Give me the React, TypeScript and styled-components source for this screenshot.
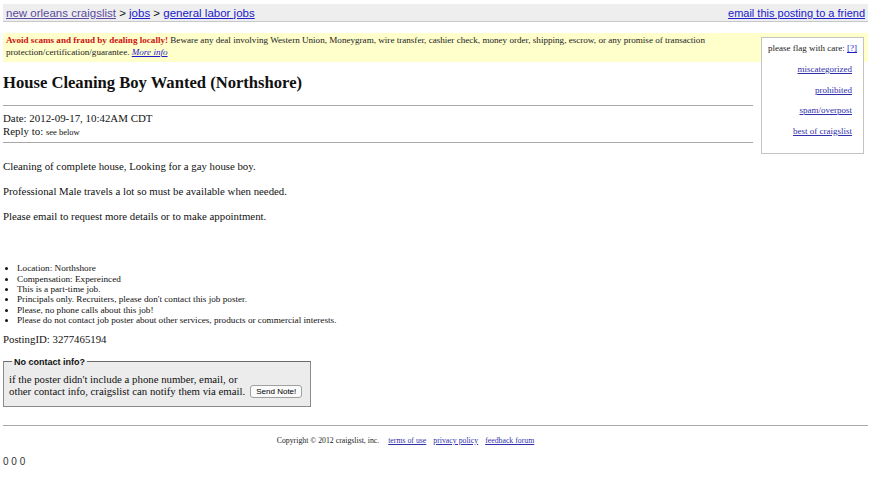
import React from 'react';
import styled, { createGlobalStyle } from 'styled-components';

const Global = createGlobalStyle`
  body {
    margin: 4px 3px;
    background: #fff;
    color: #111;
    font-family: 'Liberation Serif', 'Times New Roman', serif;
  }
  a { color: #1a1acc; }
`;

const TopBar = styled.div`
  display: flex;
  justify-content: space-between;
  align-items: center;
  height: 17px;
  padding: 0 3px;
  background: #eeeeee;
  border-bottom: 1px solid #c8c8c8;
  font-family: 'Liberation Sans', Arial, sans-serif;
  font-size: 11.5px;
`;

const Crumbs = styled.div<{ $size?: number }>`
  font-size: ${(p) => p.$size ?? 11.5}px;
  a { color: #2020cc; }
  a.visited { color: #5b4a9e; }
`;

const FlagBox = styled.div`
  float: right;
  width: 101px;
  margin: 15px 4px 0 8px;
  padding: 4px 0 17px;
  background: #fff;
  border: 1px solid #c4c4c4;
  font-size: 9px;
  text-align: right;
`;

const FlagHead = styled.div`
  padding: 1px 6px 0 0;
  margin-bottom: 11px;
  color: #222;
`;

const FlagLink = styled.a`
  display: block;
  padding-right: 11px;
  line-height: 10px;
  margin-bottom: 10.5px;
  color: #3030aa !important;
  &:last-child { margin-bottom: 0; }
`;

const Warning = styled.div`
  margin-top: 11px;
  padding: 2px 3px 4px;
  background: #ffffcc;
  font-size: 9.1px;
  line-height: 11.6px;
  color: #222;
`;

const Alert = styled.b`
  color: #cc1111;
`;

const Title = styled.h2`
  margin: 10px 0 0;
  font-size: 16.6px;
  font-weight: bold;
  line-height: 22px;
  color: #111;
`;

const Rule = styled.hr<{ $top?: number }>`
  overflow: hidden;
  height: 0;
  margin: ${(p) => p.$top ?? 8}px 0 0;
  border: none;
  border-top: 1px solid #a8a8a8;
`;

const Meta = styled.div`
  padding: 6px 0 3px;
  font-size: 10.9px;
  line-height: 13px;
  small { font-size: 8.5px; }
`;

const Body = styled.div`
  padding-top: 16px;
  font-size: 10.8px;
  line-height: 14px;
  p { margin: 0 0 11px; }
`;

const Facts = styled.ul`
  margin: 40px 0 0;
  padding-left: 14px;
  font-size: 9.2px;
  line-height: 10.4px;
`;

const PostingId = styled.div`
  margin-top: 7px;
  font-size: 10.8px;
`;

const Contact = styled.fieldset`
  display: inline-block;
  margin: 11px 0 0;
  padding: 5px 8px 8px 5px;
  background: #ececec;
  border: 1px solid #8a8a8a;
  border-top-color: #6a6a6a;
  font-size: 10.8px;
  line-height: 12px;
  legend {
    margin-left: 3px;
    padding: 0 2px;
    font-family: 'Liberation Sans', Arial, sans-serif;
    font-size: 9px;
    font-weight: bold;
  }
`;

const SendButton = styled.button`
  margin-left: 5px;
  padding: 1px 5px;
  font-family: 'Liberation Sans', Arial, sans-serif;
  font-size: 8px;
  background: #fafafa;
  border: 1px solid #a0a0a0;
  border-radius: 3px;
  vertical-align: 1px;
`;

const Footer = styled.div`
  margin-top: 18px;
  border-top: 1px solid #a8a8a8;
  padding: 10px 60px 0 0;
  text-align: center;
  font-size: 7.8px;
  color: #222;
  a { margin-left: 7px; color: #3030aa; }
`;

const Counter = styled.div`
  margin-top: 11px;
  font-family: 'Liberation Sans', Arial, sans-serif;
  font-size: 10px;
  color: #333;
`;

const facts = [
  'Location: Northshore',
  'Compensation: Expereinced',
  'This is a part-time job.',
  "Principals only. Recruiters, please don't contact this job poster.",
  'Please, no phone calls about this job!',
  'Please do not contact job poster about other services, products or commercial interests.',
];

const flags = ['miscategorized', 'prohibited', 'spam/overpost', 'best of craigslist'];

export default function App() {
  return (
    <>
      <Global />
      <TopBar>
        <Crumbs>
          <a className="visited" href="#">new orleans craigslist</a> &gt; <a href="#">jobs</a> &gt;{' '}
          <a href="#">general labor jobs</a>
        </Crumbs>
        <Crumbs $size={11}>
          <a href="#">email this posting to a friend</a>
        </Crumbs>
      </TopBar>

      <FlagBox>
        <FlagHead>
          please flag with care: <a href="#">[?]</a>
        </FlagHead>
        {flags.map((f) => (
          <FlagLink key={f} href="#">{f}</FlagLink>
        ))}
      </FlagBox>

      <Warning>
        <Alert>Avoid scams and fraud by dealing locally!</Alert> Beware any deal involving Western Union,
        Moneygram, wire transfer, cashier check, money order, shipping, escrow, or any promise of transaction
        protection/certification/guarantee. <a href="#"><i>More info</i></a>
      </Warning>

      <Title>House Cleaning Boy Wanted (Northshore)</Title>
      <Rule $top={11} />
      <Meta>
        Date: 2012-09-17, 10:42AM CDT
        <br />
        Reply to: <small>see below</small>
      </Meta>
      <Rule $top={0} />

      <Body>
        <p>Cleaning of complete house, Looking for a gay house boy.</p>
        <p>Professional Male travels a lot so must be available when needed.</p>
        <p>Please email to request more details or to make appointment.</p>
      </Body>

      <Facts>
        {facts.map((f) => (
          <li key={f}>{f}</li>
        ))}
      </Facts>

      <PostingId>PostingID: 3277465194</PostingId>

      <Contact>
        <legend>No contact info?</legend>
        if the poster didn't include a phone number, email, or
        <br />
        other contact info, craigslist can notify them via email.
        <SendButton>Send Note!</SendButton>
      </Contact>

      <Footer>
        Copyright © 2012 craigslist, inc. <a href="#">terms of use</a>
        <a href="#">privacy policy</a>
        <a href="#">feedback forum</a>
      </Footer>

      <Counter>0 0 0</Counter>
    </>
  );
}
